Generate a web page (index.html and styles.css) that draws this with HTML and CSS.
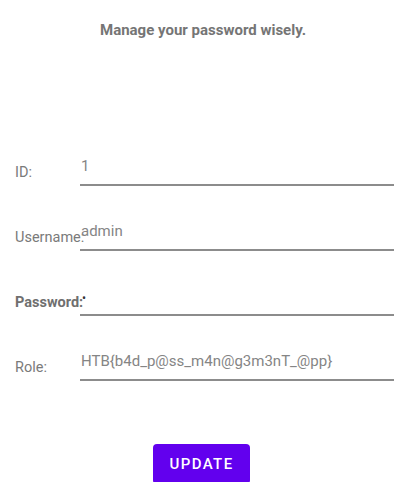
FILE: index.html
```html
<!DOCTYPE html>
<html>
<head>
<meta charset="utf-8">
<link rel="stylesheet" href="styles.css">
</head>
<body>
<div class="screen">
  <h1 class="title">Manage your password wisely.</h1>
  <div class="form">
    <div class="row">
      <span class="label">ID:</span>
      <div class="field"><span class="value">1</span></div>
    </div>
    <div class="row">
      <span class="label">Username:</span>
      <div class="field"><span class="value">admin</span></div>
    </div>
    <div class="row">
      <span class="label bold">Password:</span>
      <div class="field"><span class="value dot">&#8226;</span></div>
    </div>
    <div class="row">
      <span class="label">Role:</span>
      <div class="field"><span class="value">HTB{b4d_p@ss_m4n@g3m3nT_@pp}</span></div>
    </div>
  </div>
  <div class="actions">
    <button class="btn">UPDATE</button>
  </div>
</div>
</body>
</html>
```
FILE: styles.css
```css
html, body {
  margin: 0;
  padding: 0;
  background: #ffffff;
}
.screen {
  width: 406px;
  height: 482px;
  overflow: hidden;
  font-family: Roboto, "Noto Sans", sans-serif;
}
.title {
  margin: 0;
  padding-top: 21px;
  text-align: center;
  font-size: 15px;
  font-weight: bold;
  color: #757575;
  line-height: 18px;
}
.form {
  margin-top: 119px;
  display: flex;
  flex-direction: column;
  gap: 37px;
}
.row {
  display: flex;
  align-items: flex-end;
  height: 28px;
  padding-left: 15px;
  padding-right: 12px;
}
.label {
  width: 65px;
  flex: none;
  white-space: nowrap;
  font-size: 14.5px;
  color: #7a7a7a;
  padding-bottom: 5px;
  line-height: 16px;
}
.label.bold {
  font-weight: bold;
  color: #6f6f6f;
}
.field {
  flex: 1;
  height: 28px;
  border-bottom: 2px solid #8c8c8c;
  box-sizing: border-box;
}
.value {
  display: block;
  font-size: 15px;
  color: #858585;
  line-height: 16px;
  padding-left: 1px;
}
.value.dot {
  font-size: 12px;
  color: #333;
  line-height: 10px;
  padding-top: 5px;
  padding-left: 2px;
}
.actions {
  display: flex;
  justify-content: center;
  margin-top: 63px;
}
.btn {
  width: 97px;
  height: 40px;
  margin-right: 3px;
  border: none;
  border-radius: 4px;
  background: #6200ee;
  color: #ffffff;
  font-family: Roboto, sans-serif;
  font-size: 15px;
  font-weight: 500;
  letter-spacing: 1.4px;
}
```
